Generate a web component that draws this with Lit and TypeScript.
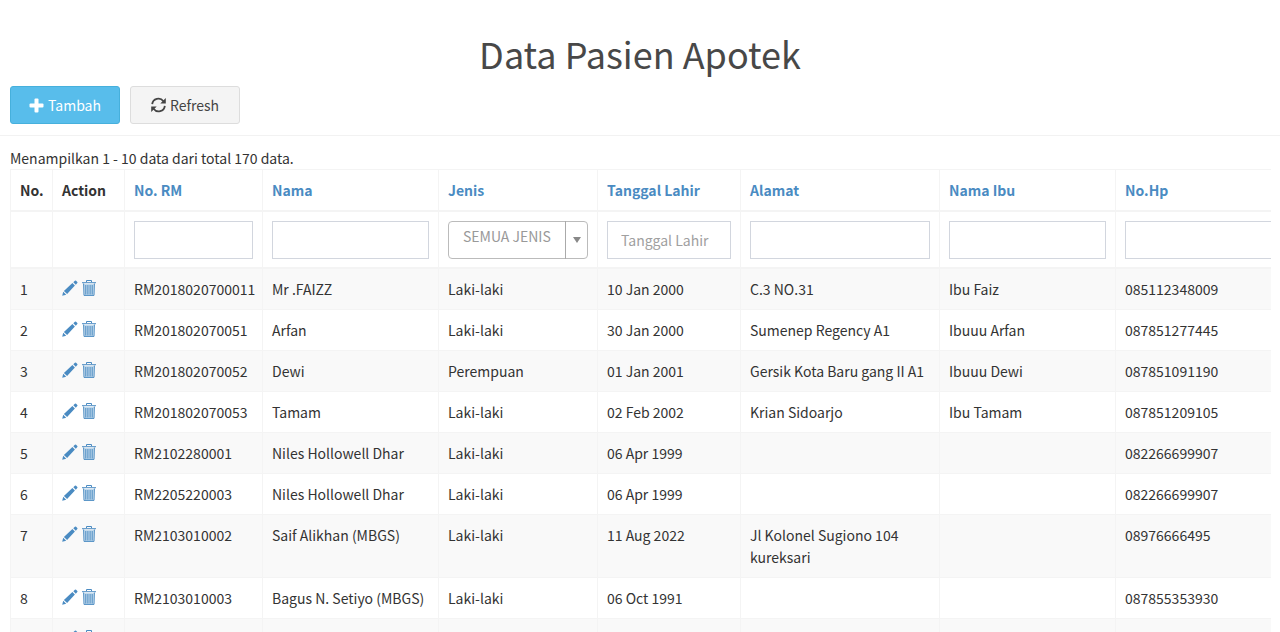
import { LitElement, html, css, svg, nothing } from "lit";
import { customElement } from "lit/decorators.js";

interface Patient {
  rm: string;
  name: string;
  kind: string;
  born: string;
  address: string;
  mother: string;
  phone: string;
}

const patient = (rm = "", name = "", kind = "", born = "", address = "", mother = "", phone = ""): Patient => ({
  rm, name, kind, born, address, mother, phone,
});

const patients: Patient[] = [
  patient("RM2018020700011", "Mr .FAIZZ", "Laki-laki", "10 Jan 2000", "C.3 NO.31", "Ibu Faiz", "085112348009"),
  patient("RM201802070051", "Arfan", "Laki-laki", "30 Jan 2000", "Sumenep Regency A1", "Ibuuu Arfan", "087851277445"),
  patient("RM201802070052", "Dewi", "Perempuan", "01 Jan 2001", "Gersik Kota Baru gang II A1", "Ibuuu Dewi", "087851091190"),
  patient("RM201802070053", "Tamam", "Laki-laki", "02 Feb 2002", "Krian Sidoarjo", "Ibu Tamam", "087851209105"),
  patient("RM2102280001", "Niles Hollowell Dhar", "Laki-laki", "06 Apr 1999", "", "", "082266699907"),
  patient("RM2205220003", "Niles Hollowell Dhar", "Laki-laki", "06 Apr 1999", "", "", "082266699907"),
  patient("RM2103010002", "Saif Alikhan (MBGS)", "Laki-laki", "11 Aug 2022", "Jl Kolonel Sugiono 104 kureksari", "", "08976666495"),
  patient("RM2103010003", "Bagus N. Setiyo (MBGS)", "Laki-laki", "06 Oct 1991", "", "", "087855353930"),
  patient(),
];

const columns: { key: keyof Patient; label: string; placeholder?: string }[] = [
  { key: "rm", label: "No. RM" },
  { key: "name", label: "Nama" },
  { key: "kind", label: "Jenis" },
  { key: "born", label: "Tanggal Lahir", placeholder: "Tanggal Lahir" },
  { key: "address", label: "Alamat" },
  { key: "mother", label: "Nama Ibu" },
  { key: "phone", label: "No.Hp" },
];

const plusIcon = html`<svg class="icon" width="15" height="15" viewBox="0 0 15 15" aria-hidden="true">
  <rect x="0.5" y="5.5" width="14" height="4" rx="1" /><rect x="5.5" y="0.5" width="4" height="14" rx="1" />
</svg>`;

const refreshIcon = html`<svg class="icon" width="15" height="16" viewBox="0 0 15 16" aria-hidden="true">
  <path class="arc" d="M1.200 7.200A6.200 6.200 0 0 1 12.400 4.200M13.800 8.800A6.200 6.200 0 0 1 2.600 11.800" />
  <path d="M14.800 1V6.500H9.300zM0.200 15V9.500H5.700z" />
</svg>`;

const pencilIcon = html`<svg class="icon" width="16" height="16" viewBox="0 0 16 16" aria-hidden="true">
  <path d="M0.200 15.800 1.200 11.800 4.200 14.800zM1.900 10.900 10.400 3.100 12.900 5.600 5.100 14.100zM11.300 2.200 12.900 0.700Q13.500 0.200 14.100 0.700L15.300 1.900Q15.800 2.500 15.300 3.100L13.800 4.700z" />
</svg>`;

const trashBars = [3.8, 5.9, 8.1, 10.2].map((x) => svg`<path d="M${x} 6V15.500" />`);
const trashIcon = html`<svg class="trash" width="14" height="18" viewBox="0 0 14 18" aria-hidden="true">
  <path class="body" d="M2 5H12L11.500 16H2.500z" />
  <path d="M4.500 3V1.500H9.500V3M0 3.700H14M1.600 4.500 2 16.400H12L12.400 4.500" />
  ${trashBars}
</svg>`;

@customElement("app-root")
export class AppRoot extends LitElement {
  static styles = css`
    :host {
      display: block;
      height: 100vh;
      overflow: hidden;
      background: #fff;
      color: #333;
      font-family: "Noto Sans CJK SC", "Open Sans", sans-serif;
      font-size: 14px;
      line-height: 22px;
    }
    * { box-sizing: border-box; }
    .icon { fill: currentColor; flex: none; }
    .arc { fill: none; stroke: currentColor; stroke-width: 1.8; }
    .title {
      margin: 0;
      padding-top: 30px;
      font-size: 36px;
      line-height: 46px;
      font-weight: 400;
      text-align: center;
      color: #484848;
    }
    .toolbar {
      display: flex;
      gap: 10px;
      padding: 10px 10px 11px;
      border-bottom: 1px solid #f2f2f2;
    }
    .btn {
      display: flex;
      align-items: center;
      justify-content: center;
      gap: 4px;
      width: 110px;
      height: 38px;
      padding: 0;
      border: 1px solid #ddd;
      border-radius: 3px;
      background: #f4f4f4;
      color: #444;
      font: inherit;
      cursor: pointer;
    }
    .btn.primary { border-color: #46b0dc; background: #58bdeb; color: #fff; }
    .content { padding: 12px 9px 0 10px; }
    .summary { margin: 0; line-height: 21px; }
    .scroller { overflow-x: auto; }
    table {
      table-layout: fixed;
      width: 1310px;
      border-collapse: separate;
      border-spacing: 0;
      border-top: 1px solid #f4f4f4;
    }
    .c-no { width: 42px; }
    .c-action { width: 72px; }
    .c-rm { width: 138px; }
    .c-name, .c-mother { width: 176px; }
    .c-kind { width: 159px; }
    .c-born { width: 143px; }
    .c-address { width: 199px; }
    th, td {
      padding: 9px;
      border-left: 1px solid #f4f4f4;
      border-bottom: 1px solid #f4f4f4;
      text-align: left;
      vertical-align: top;
    }
    th { border-bottom-width: 2px; font-weight: 700; white-space: nowrap; }
    .filters td { padding-bottom: 8px; border-bottom-width: 2px; }
    tbody tr:nth-child(odd) td { background: #f9f9f9; }
    a { color: #4a8bc2; text-decoration: none; }
    .actions { display: flex; gap: 4px; height: 22px; }
    .actions a { display: flex; align-items: center; height: 20px; }
    .trash { fill: none; stroke: currentColor; stroke-width: 1; }
    .trash .body { fill: #c3daec; stroke: none; }
    .control {
      display: block;
      width: 100%;
      height: 38px;
      padding: 0 13px;
      border: 1px solid #d2d6de;
      border-radius: 0;
      background: #fff;
      color: #555;
      font: inherit;
    }
    .control::placeholder { color: #a0a0a0; opacity: 1; }
    .pick { display: grid; }
    .pick > * { grid-area: 1 / 1; }
    .pick .control {
      appearance: none;
      padding: 0 24px 8px 14px;
      border-color: #bbb;
      border-radius: 4px;
      color: #999;
    }
    .arrow {
      justify-self: end;
      display: flex;
      align-items: center;
      justify-content: center;
      width: 23px;
      border-left: 1px solid #aaa;
      color: #888;
      pointer-events: none;
    }
  `;

  private filter(column: (typeof columns)[number]) {
    if (column.key === "kind") {
      return html`<div class="pick">
        <select class="control" aria-label=${column.label}><option>SEMUA JENIS</option></select>
        <span class="arrow"><svg class="icon" width="8" height="6" viewBox="0 0 8 6"><path d="M0 0H8L4 6z" /></svg></span>
      </div>`;
    }
    return html`<input class="control" type="text" aria-label=${column.label} placeholder=${column.placeholder ?? nothing} />`;
  }

  render() {
    return html`
      <h1 class="title">Data Pasien Apotek</h1>
      <div class="toolbar">
        <button class="btn primary" type="button">${plusIcon}<span>Tambah</span></button>
        <button class="btn" type="button">${refreshIcon}<span>Refresh</span></button>
      </div>
      <main class="content">
        <p class="summary">Menampilkan 1 - 10 data dari total 170 data.</p>
        <div class="scroller">
          <table>
            <colgroup>
              <col class="c-no" /><col class="c-action" />
              ${columns.map((c) => html`<col class="c-${c.key}" />`)}
            </colgroup>
            <thead>
              <tr>
                <th>No.</th>
                <th>Action</th>
                ${columns.map((c) => html`<th><a href="#">${c.label}</a></th>`)}
              </tr>
              <tr class="filters">
                <td></td>
                <td></td>
                ${columns.map((c) => html`<td>${this.filter(c)}</td>`)}
              </tr>
            </thead>
            <tbody>
              ${patients.map(
                (p, i) => html`<tr>
                  <td>${p.rm ? i + 1 : nothing}</td>
                  <td>
                    <div class="actions">
                      <a href="#" aria-label="Edit">${pencilIcon}</a>
                      <a href="#" aria-label="Delete">${trashIcon}</a>
                    </div>
                  </td>
                  ${columns.map((c) => html`<td>${p[c.key]}</td>`)}
                </tr>`,
              )}
            </tbody>
          </table>
        </div>
      </main>
    `;
  }
}
